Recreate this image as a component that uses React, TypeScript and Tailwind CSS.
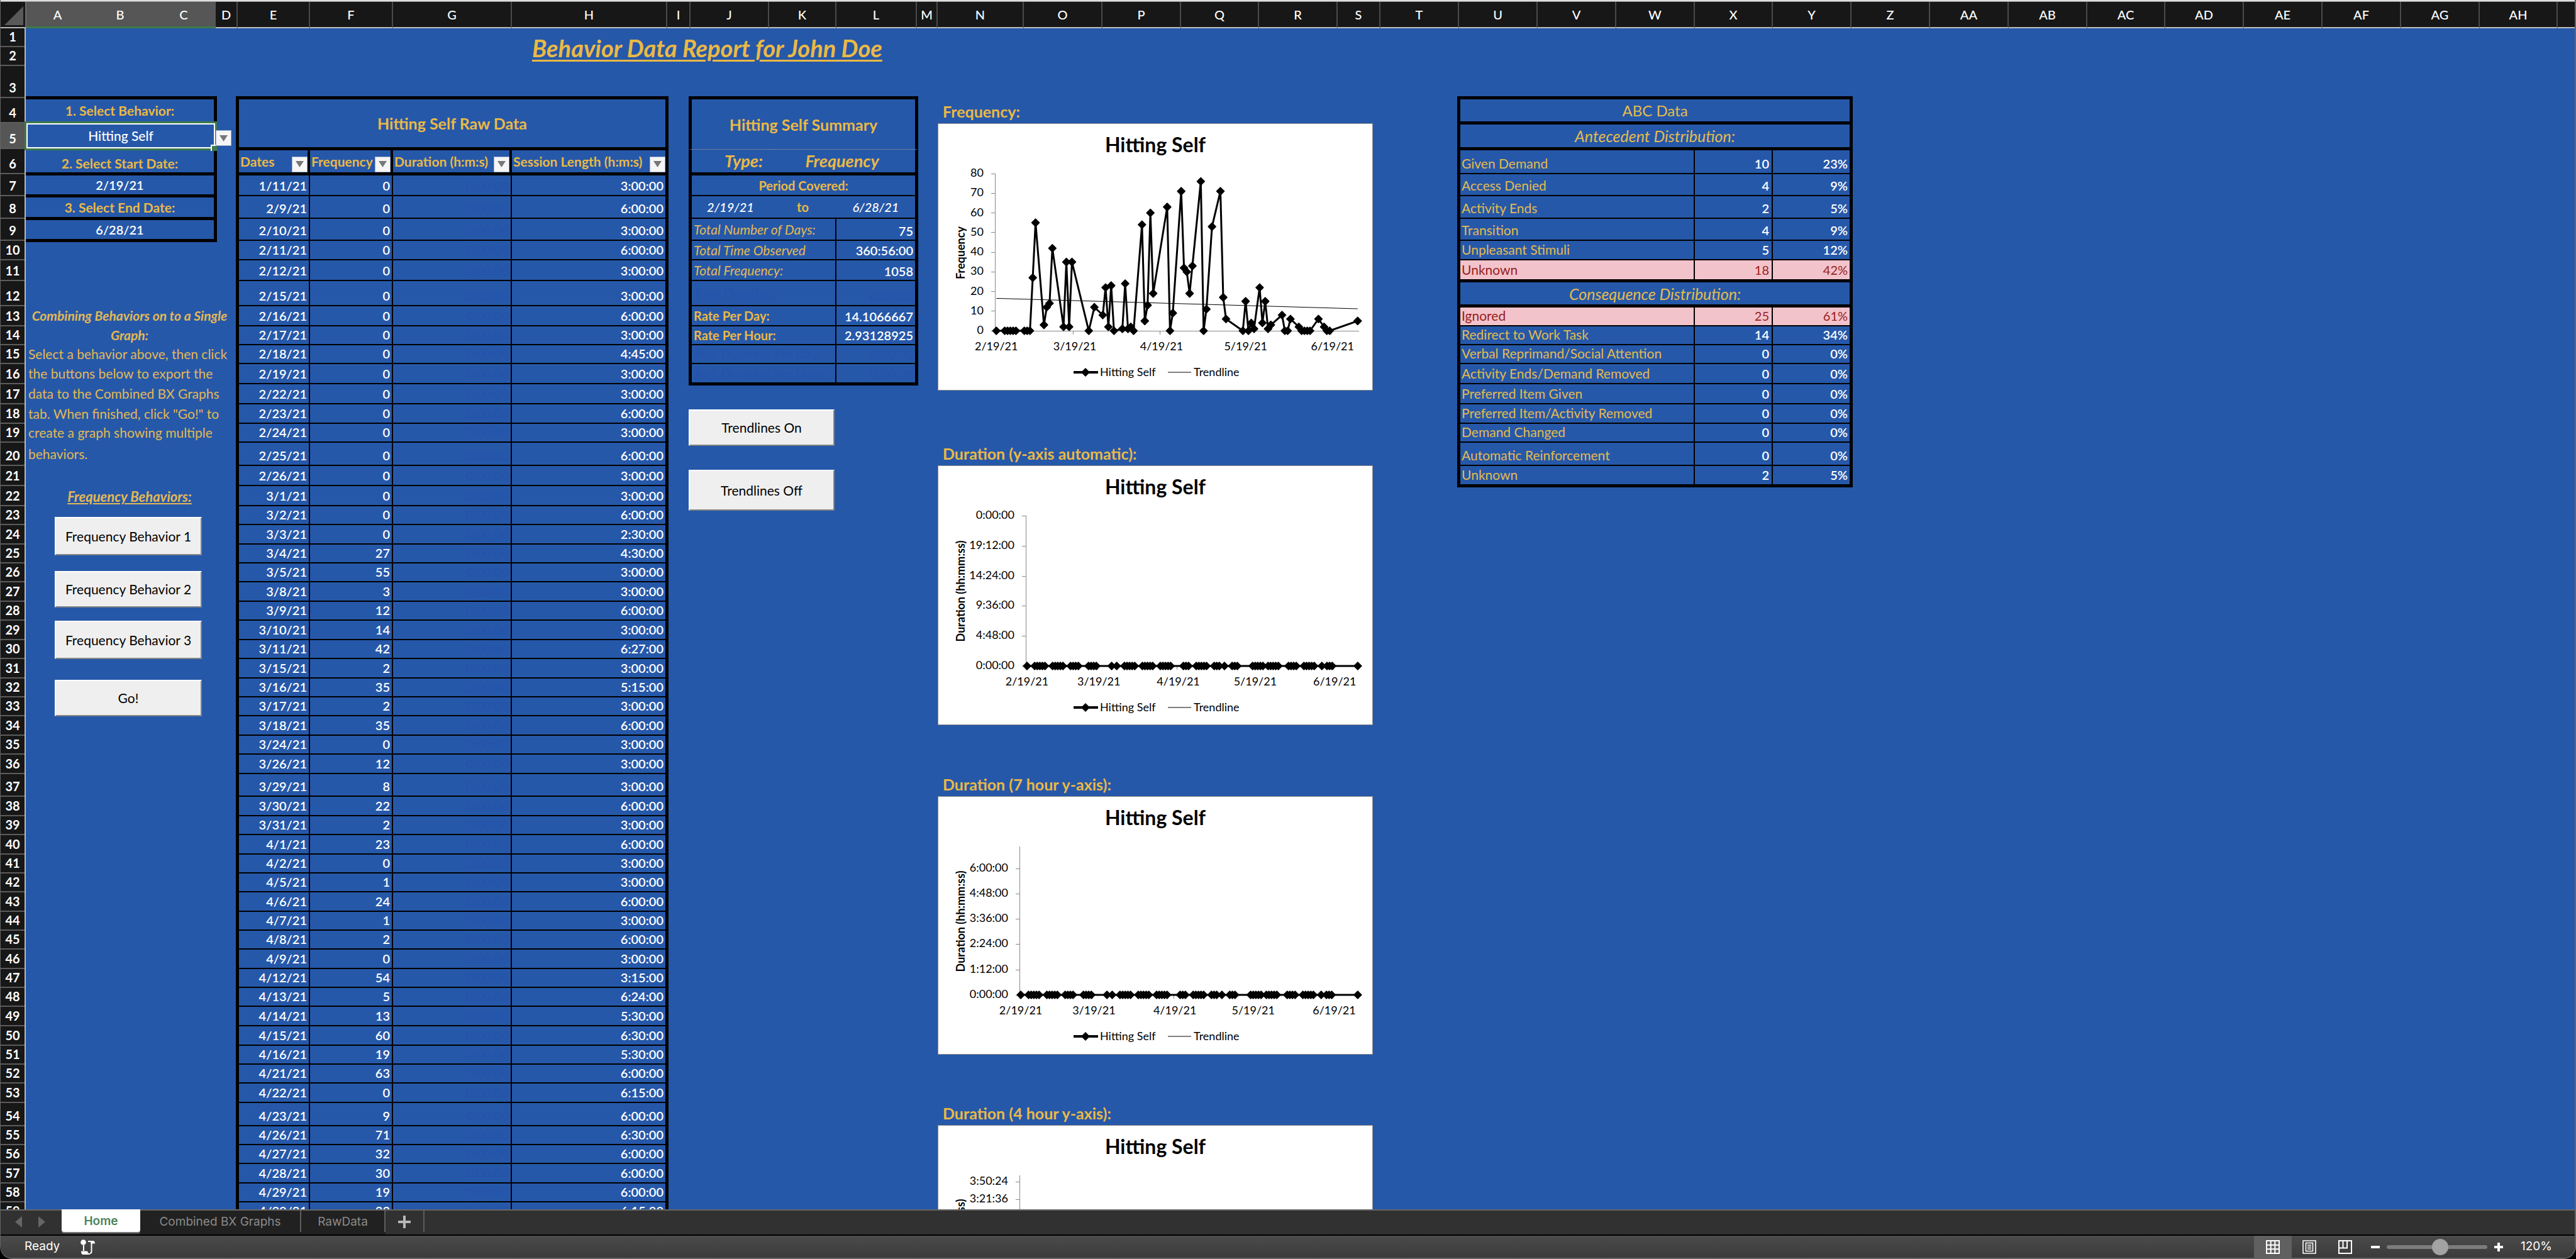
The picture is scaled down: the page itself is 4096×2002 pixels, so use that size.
import React from "react";

/* Bottom edge of every sheet row; index 0 is the top of row 1. */
const EDGES = [
  45, 74, 104, 155, 195, 236, 276, 311, 347, 382, 413, 446, 486, 518, 548, 578, 610, 642, 673, 703,
  740, 772, 804, 834, 865, 895, 925, 956, 986, 1017, 1047, 1078, 1108, 1138, 1169, 1199, 1230, 1266,
  1297, 1327, 1358, 1388, 1418, 1449, 1479, 1509, 1540, 1570, 1600, 1631, 1662, 1692, 1722, 1753,
  1790, 1820, 1850, 1881, 1911, 1941,
];
const THIN = 1;
const THICK = 3;

const span = (from: number, to: number, topLine = 0, bottomLine = 0) => ({
  height: EDGES[to] + bottomLine - EDGES[from - 1] - topLine,
});

const COLUMNS: [string, number][] = [
  ["A", 99], ["B", 100], ["C", 102], ["D", 35], ["E", 115], ["F", 132], ["G", 189], ["H", 247],
  ["I", 37], ["J", 125], ["K", 107], ["L", 128], ["M", 33], ["N", 137], ["O", 125], ["P", 125],
  ["Q", 124], ["R", 125], ["S", 68], ["T", 125], ["U", 125], ["V", 125], ["W", 125], ["X", 124],
  ["Y", 125], ["Z", 125], ["AA", 125], ["AB", 125], ["AC", 124], ["AD", 125], ["AE", 125],
  ["AF", 125], ["AG", 125], ["AH", 124],
];

const RAW: [string, number, string][] = [
  ["1/11/21", 0, "3:00:00"], ["2/9/21", 0, "6:00:00"], ["2/10/21", 0, "3:00:00"],
  ["2/11/21", 0, "6:00:00"], ["2/12/21", 0, "3:00:00"], ["2/15/21", 0, "3:00:00"],
  ["2/16/21", 0, "6:00:00"], ["2/17/21", 0, "3:00:00"], ["2/18/21", 0, "4:45:00"],
  ["2/19/21", 0, "3:00:00"], ["2/22/21", 0, "3:00:00"], ["2/23/21", 0, "6:00:00"],
  ["2/24/21", 0, "3:00:00"], ["2/25/21", 0, "6:00:00"], ["2/26/21", 0, "3:00:00"],
  ["3/1/21", 0, "3:00:00"], ["3/2/21", 0, "6:00:00"], ["3/3/21", 0, "2:30:00"],
  ["3/4/21", 27, "4:30:00"], ["3/5/21", 55, "3:00:00"], ["3/8/21", 3, "3:00:00"],
  ["3/9/21", 12, "6:00:00"], ["3/10/21", 14, "3:00:00"], ["3/11/21", 42, "6:27:00"],
  ["3/15/21", 2, "3:00:00"], ["3/16/21", 35, "5:15:00"], ["3/17/21", 2, "3:00:00"],
  ["3/18/21", 35, "6:00:00"], ["3/24/21", 0, "3:00:00"], ["3/26/21", 12, "3:00:00"],
  ["3/29/21", 8, "3:00:00"], ["3/30/21", 22, "6:00:00"], ["3/31/21", 2, "3:00:00"],
  ["4/1/21", 23, "6:00:00"], ["4/2/21", 0, "3:00:00"], ["4/5/21", 1, "3:00:00"],
  ["4/6/21", 24, "6:00:00"], ["4/7/21", 1, "3:00:00"], ["4/8/21", 2, "6:00:00"],
  ["4/9/21", 0, "3:00:00"], ["4/12/21", 54, "3:15:00"], ["4/13/21", 5, "6:24:00"],
  ["4/14/21", 13, "5:30:00"], ["4/15/21", 60, "6:30:00"], ["4/16/21", 19, "5:30:00"],
  ["4/21/21", 63, "6:00:00"], ["4/22/21", 0, "6:15:00"], ["4/23/21", 9, "6:00:00"],
  ["4/26/21", 71, "6:30:00"], ["4/27/21", 32, "6:00:00"], ["4/28/21", 30, "6:00:00"],
  ["4/29/21", 19, "6:00:00"], ["4/30/21", 33, "6:15:00"],
];

/* Days since 2/19/21 and the frequency on that day. */
const SERIES: [number, number][] = [
  [0, 0], [3, 0], [4, 0], [5, 0], [6, 0], [7, 0], [10, 0], [11, 0], [12, 0], [13, 27], [14, 55],
  [17, 3], [18, 12], [19, 14], [20, 42], [24, 2], [25, 35], [26, 2], [27, 35], [33, 0], [35, 12],
  [38, 8], [39, 22], [40, 2], [41, 23], [42, 0], [45, 1], [46, 24], [47, 1], [48, 2], [49, 0],
  [52, 54], [53, 5], [54, 13], [55, 60], [56, 19], [61, 63], [62, 0], [63, 9], [66, 71], [67, 32],
  [68, 30], [69, 19], [70, 33], [73, 76], [74, 0], [75, 11], [77, 53], [80, 71], [81, 17], [82, 6],
  [88, 0], [89, 15], [90, 0], [91, 4], [92, 1], [94, 22], [95, 4], [96, 15], [97, 1], [98, 3],
  [102, 8], [103, 0], [104, 0], [105, 6], [108, 2], [109, 0], [110, 0], [111, 0], [112, 0],
  [115, 6], [117, 2], [118, 0], [119, 0], [129, 5],
];

function FilterButton({ label }: { label: string }) {
  return (
    <button
      aria-label={label}
      className="flex h-[25px] w-[25px] shrink-0 items-center justify-center border border-[#9fb0cc] bg-[#f6f6f6]"
    >
      <svg width="13" height="10" viewBox="0 0 13 10">
        <path d="M0 0H13L6.5 10Z" fill="#777" />
      </svg>
    </button>
  );
}

function MacroButton({ children, className }: { children: string; className: string }) {
  return (
    <button
      className={
        "border-2 border-t-white border-r-[#858585] border-b-[#858585] border-l-white bg-[#efefef] text-[21px] leading-7 text-black " +
        className
      }
    >
      {children}
    </button>
  );
}

function ColumnHeader() {
  return (
    <div className="flex h-[42px] shrink-0 bg-[#171717] text-xl font-medium text-white">
      <div className="flex w-[41px] shrink-0 items-end justify-end border-r-2 border-b-2 border-r-[#6b6b6b] border-b-[#b9b9b9] p-[3px]">
        <svg width="30" height="30" viewBox="0 0 30 30">
          <path d="M30 0V30H0Z" fill="#595959" />
        </svg>
      </div>
      {COLUMNS.map(([name, width], i) => (
        <div
          key={name}
          style={{ width }}
          className={
            "flex shrink-0 items-center justify-center " +
            (i < 3
              ? "border-b-[3px] border-[#3e7a4a] bg-[#565656]"
              : "border-r-2 border-b-2 border-r-[#4a4a4a] border-b-[#bdbdbd]")
          }
        >
          {name}
        </div>
      ))}
      <div className="flex-1 border-b-2 border-[#bdbdbd]" />
    </div>
  );
}

function RowHeader() {
  return (
    <div className="w-10 shrink-0 border-r-2 border-[#b9b9b9] bg-[#171717] text-xl leading-6 font-bold text-white">
      {EDGES.slice(1).map((_, i) => (
        <div
          key={i}
          style={span(i + 1, i + 1, i === 0 ? 0 : THIN, THIN)}
          className={
            "flex items-end justify-center border-b-2 border-[#5c5c5c] pb-[3px] " + (i === 4 ? "bg-[#565656]" : "")
          }
        >
          {i + 1}
        </div>
      ))}
    </div>
  );
}

const NOTE = [
  "Select a behavior above, then click",
  "the buttons below to export the",
  "data to the Combined BX Graphs",
  'tab. When finished, click "Go!" to',
  "create a graph showing multiple",
  "behaviors.",
];

function Controls() {
  return (
    <div className="w-[334px] shrink-0 pt-[108px] text-[21px] leading-7">
      <div className="w-[304px] text-center">
        <label
          htmlFor="behavior"
          className="flex h-10 items-center justify-center border-t-[5px] border-r-[5px] border-black font-bold text-[#ebb945]"
        >
          1. Select Behavior:
        </label>
        <div className="relative -ml-[2px] h-[46px] border-[3px] border-[#3e7a4a]">
          <select
            id="behavior"
            className="h-full w-full appearance-none border-2 border-white text-center font-medium text-white [text-align-last:center]"
          >
            <option>Hitting Self</option>
          </select>
          <span className="absolute -right-[3px] -bottom-[4px] h-[10px] w-[10px] border-t-2 border-l-2 border-white bg-[#3e7a4a]" />
          <span className="absolute top-[11px] left-[301px]">
            <FilterButton label="Open behavior list" />
          </span>
        </div>
        <label
          htmlFor="start"
          className="flex h-10 items-end justify-center border-r-[5px] border-b-[5px] border-black font-bold text-[#ebb945]"
        >
          2. Select Start Date:
        </label>
        <input
          id="start"
          defaultValue="2/19/21"
          className="block h-[35px] w-full border-r-[5px] border-b-[5px] border-black text-center text-xl font-semibold text-white"
        />
        <label
          htmlFor="end"
          className="flex h-9 items-center justify-center border-r-[5px] border-b-[5px] border-black font-bold text-[#ebb945]"
        >
          3. Select End Date:
        </label>
        <input
          id="end"
          defaultValue="6/28/21"
          className="block h-[35px] w-full border-r-[5px] border-b-[5px] border-black text-center text-xl font-semibold text-white"
        />
      </div>
      <div className="mt-[101px] w-[330px] text-[#e3b855]">
        <div style={span(13, 13)} className="flex items-center justify-center font-bold whitespace-nowrap italic">
          Combining Behaviors on to a Single
        </div>
        <div style={span(14, 14)} className="flex items-center justify-center font-bold italic">
          Graph:
        </div>
        {NOTE.map((line, i) => (
          <div key={line} style={span(15 + i, 15 + i)} className="flex items-center pl-1 whitespace-nowrap">
            {line}
          </div>
        ))}
        <div style={span(21, 22)} className="flex items-end justify-center text-[22px] font-bold italic underline">
          Frequency Behaviors:
        </div>
      </div>
      <div className="flex flex-col pt-[18px] pl-[46px]">
        <MacroButton className="h-[61px] w-[234px]">Frequency Behavior 1</MacroButton>
        <MacroButton className="mt-[25px] h-[58px] w-[234px]">Frequency Behavior 2</MacroButton>
        <MacroButton className="mt-[21px] h-[61px] w-[234px]">Frequency Behavior 3</MacroButton>
        <MacroButton className="mt-[33px] h-[58px] w-[234px]">Go!</MacroButton>
      </div>
    </div>
  );
}

const RAW_HEADS = ["Dates", "Frequency", "Duration (h:m:s)", "Session Length (h:m:s)"];

function RawTable() {
  return (
    <table className="w-[688px] shrink-0 table-fixed border-separate border-spacing-0 text-xl leading-6">
      <colgroup>
        <col className="w-[118px]" />
        <col className="w-[132px]" />
        <col className="w-[189px]" />
        <col className="w-[249px]" />
      </colgroup>
      <thead className="text-[#ebb945]">
        <tr style={span(4, 5, -2, THICK)}>
          <th colSpan={4} className="border-[5px] border-black text-[25px] leading-8 font-bold">
            Hitting Self Raw Data
          </th>
        </tr>
        <tr style={span(6, 6, THICK, THICK)}>
          {RAW_HEADS.map((name, i) => (
            <th
              key={name}
              className={
                "border-b-[5px] border-black p-0 text-[21px] font-bold " +
                (i === 3 ? "border-r-[5px]" : "border-r-4") +
                (i === 0 ? " border-l-[5px]" : "")
              }
            >
              <div className="flex h-[34px] items-end justify-between pl-[2px]">
                <span className="self-center whitespace-nowrap">{name}</span>
                <FilterButton label={"Filter " + name} />
              </div>
            </th>
          ))}
        </tr>
      </thead>
      <tbody className="text-right align-bottom font-semibold text-white">
        {RAW.map(([date, count, length], i) => (
          <tr key={date} style={span(7 + i, 7 + i, i === 0 ? THICK : THIN, THIN)}>
            <td className="border-r-2 border-b-2 border-l-[5px] border-black p-0 pr-[3px] pb-[3px]">{date}</td>
            <td className="border-r-2 border-b-2 border-black p-0 pr-[3px] pb-[3px]">{count}</td>
            <td className="border-r-2 border-b-2 border-black p-0 pr-[3px] pb-[3px] text-[#2553ad]">0:00:00</td>
            <td className="border-r-[5px] border-b-2 border-black p-0 pr-[3px] pb-[3px]">{length}</td>
          </tr>
        ))}
      </tbody>
    </table>
  );
}

const TOTALS: [string, string, string, string][] = [
  ["Total Number of Days:", "75", "italic text-[#e3b855]", "text-white"],
  ["Total Time Observed", "360:56:00", "italic text-[#e3b855]", "text-white"],
  ["Total Frequency:", "1058", "italic text-[#e3b855]", "text-white"],
  ["Total Duration:", "0:00:00", "italic text-[#2553ad]", "text-[#2553ad]"],
  ["Rate Per Day:", "14.1066667", "font-bold text-[#ebb945]", "text-white"],
  ["Rate Per Hour:", "2.93128925", "font-bold text-[#ebb945]", "text-white"],
  ["Avg. Duration Per Day:", "0:00:00", "font-bold text-[#2553ad]", "text-[#2553ad]"],
  ["Avg. Duration Per Hour:", "0:00:00", "font-bold text-[#2553ad]", "text-[#2553ad]"],
];

function SummaryTable() {
  return (
    <table className="w-[365px] table-fixed border-separate border-spacing-0 text-xl leading-6">
      <colgroup>
        <col className="w-[128px]" />
        <col className="w-[107px]" />
        <col className="w-[130px]" />
      </colgroup>
      <tbody>
        <tr style={span(4, 5, -2, THIN)}>
          <th
            colSpan={3}
            className="border-x-[5px] border-t-[5px] border-black text-[25px] leading-8 font-bold text-[#ebb945]"
          >
            Hitting Self Summary
          </th>
        </tr>
        <tr style={span(6, 6, THIN, THICK)} className="text-[27px] leading-8 font-bold text-[#ebb945] italic">
          <td className="border-t border-b-[5px] border-l-[5px] border-black border-t-[#a9a98c] p-0 pr-[10px] text-right [border-top-style:dotted]">
            Type:
          </td>
          <td
            colSpan={2}
            className="border-t border-r-[5px] border-b-[5px] border-black border-t-[#a9a98c] p-0 text-center [border-top-style:dotted]"
          >
            Frequency
          </td>
        </tr>
        <tr style={span(7, 7, THICK, THIN)}>
          <th colSpan={3} className="border-x-[5px] border-b-2 border-black p-0 font-bold text-[#ebb945]">
            Period Covered:
          </th>
        </tr>
        <tr style={span(8, 8, THIN, THIN)} className="text-center font-medium text-white">
          <td className="border-b-2 border-l-[5px] border-black p-0 italic">2/19/21</td>
          <td className="border-b-2 border-black p-0 font-bold text-[#ebb945]">to</td>
          <td className="border-r-[5px] border-b-2 border-black p-0 italic">6/28/21</td>
        </tr>
        {TOTALS.map(([label, value, labelStyle, valueStyle], i) => {
          const last = i === TOTALS.length - 1;
          return (
            <tr key={label} style={span(9 + i, 9 + i, THIN, last ? THICK : THIN)}>
              <th
                colSpan={2}
                className={
                  "border-r-2 border-l-[5px] border-black p-0 pl-[3px] text-left align-middle whitespace-nowrap " +
                  (last ? "border-b-[5px] " : "border-b-2 ") +
                  (labelStyle.startsWith("italic") ? "text-[21px] font-normal " : "") +
                  labelStyle
                }
              >
                {label}
              </th>
              <td
                className={
                  "border-r-[5px] border-black p-0 pr-[3px] pb-[2px] text-right align-bottom font-semibold " +
                  (last ? "border-b-[5px] " : "border-b-2 ") +
                  valueStyle
                }
              >
                {value}
              </td>
            </tr>
          );
        })}
      </tbody>
    </table>
  );
}

type ChartProps = {
  height: number;
  axisX: number;
  top: number;
  bottom: number;
  labels: [string, number][];
  axisTitle: string;
  axisTitleY: number;
  frequency?: boolean;
};

const DATE_TICKS: [string, number][] = [
  ["2/19/21", 0], ["3/19/21", 28], ["4/19/21", 59], ["5/19/21", 89], ["6/19/21", 120],
];

function Diamond({ x, y }: { x: number; y: number }) {
  return (
    <path
      d={`M${x} ${y - 6}L${x + 6} ${y}L${x} ${y + 6}L${x - 6} ${y}Z`}
      stroke="#000"
      strokeWidth="1.5"
      strokeLinejoin="round"
    />
  );
}

function Chart({ height, axisX, top, bottom, labels, axisTitle, axisTitleY, frequency }: ChartProps) {
  const day = (670 - axisX) / 130;
  const px = (d: number) => axisX + (d + 0.5) * day;
  const py = (v: number) => (frequency ? bottom - (v * (bottom - top)) / 80 : bottom);
  const legendY = bottom + 66;
  return (
    <svg
      viewBox={`0 0 692 ${height}`}
      width="692"
      height={height}
      className="block shrink-0 bg-white font-['Lato',sans-serif] outline-1 -outline-offset-1 outline-[#8a8a8a]"
      role="img"
      aria-label={"Hitting Self, " + axisTitle}
    >
      <text x="346" y="46" textAnchor="middle" className="text-[32px] font-bold">
        Hitting Self
      </text>
      <text
        transform={`translate(43 ${axisTitleY}) rotate(-90)`}
        textAnchor="middle"
        className="text-[18px] font-bold"
      >
        {axisTitle}
      </text>
      <g stroke="#888" strokeWidth="1" shapeRendering="crispEdges">
        <path d={`M${axisX} ${top}V${bottom + 6}M${axisX - 6} ${bottom}H670`} />
        {labels.map(([, y], i) => (
          <path key={i} d={`M${axisX - 6} ${y}H${axisX}`} />
        ))}
        {DATE_TICKS.slice(1).map(([name, d]) => (
          <path key={name} d={`M${axisX + d * day} ${bottom}v6`} />
        ))}
      </g>
      <g className="text-[18px]">
        {labels.map(([name, y], i) => (
          <text key={i} x={axisX - 18} y={y + 5} textAnchor="end">
            {name}
          </text>
        ))}
        {DATE_TICKS.map(([name, d]) => (
          <text key={name} x={px(d)} y={bottom + 31} textAnchor="middle">
            {name}
          </text>
        ))}
      </g>
      {frequency && <path d={`M${px(0)} ${py(16.5)}L${px(129)} ${py(11.2)}`} stroke="#000" strokeWidth="1" />}
      <polyline
        points={SERIES.map(([d, v]) => `${px(d)},${py(v)}`).join(" ")}
        fill="none"
        stroke="#000"
        strokeWidth="3"
        strokeLinejoin="round"
      />
      {SERIES.map(([d, v]) => (
        <Diamond key={d} x={px(d)} y={py(v)} />
      ))}
      <path d={`M216 ${legendY}H255`} stroke="#000" strokeWidth="4" />
      <Diamond x={235} y={legendY} />
      <path d={`M366 ${legendY}H403`} stroke="#000" strokeWidth="1" />
      <g className="text-[18px]">
        <text x="258" y={legendY + 6}>
          Hitting Self
        </text>
        <text x="407" y={legendY + 6}>
          Trendline
        </text>
      </g>
    </svg>
  );
}

function ChartHeading({ children, height }: { children: string; height: string }) {
  return (
    <h2 className={"flex shrink-0 items-end pb-[3px] pl-2 text-[25px] leading-8 font-bold text-[#ebb945] " + height}>
      {children}
    </h2>
  );
}

function Charts() {
  return (
    <div className="ml-[31px] flex w-[692px] shrink-0 flex-col">
      <ChartHeading height="h-[151px]">Frequency:</ChartHeading>
      <Chart
        height={425}
        axisX={91}
        top={80}
        bottom={330}
        axisTitle="Frequency"
        axisTitleY={206}
        frequency
        labels={[80, 70, 60, 50, 40, 30, 20, 10, 0].map((v) => [String(v), 330 - (v * 250) / 80])}
      />
      <ChartHeading height="h-[119px]">Duration (y-axis automatic):</ChartHeading>
      <Chart
        height={413}
        axisX={140}
        top={80}
        bottom={319}
        axisTitle="Duration (hh:mm:ss)"
        axisTitleY={200}
        labels={[
          ["0:00:00", 80], ["19:12:00", 128], ["14:24:00", 176], ["9:36:00", 223], ["4:48:00", 271],
          ["0:00:00", 319],
        ]}
      />
      <ChartHeading height="h-[113px]">Duration (7 hour y-axis):</ChartHeading>
      <Chart
        height={411}
        axisX={130}
        top={80}
        bottom={316}
        axisTitle="Duration (hh:mm:ss)"
        axisTitleY={199}
        labels={[
          ["6:00:00", 115], ["4:48:00", 155], ["3:36:00", 195], ["2:24:00", 235], ["1:12:00", 276],
          ["0:00:00", 316],
        ]}
      />
      <ChartHeading height="h-[112px]">Duration (4 hour y-axis):</ChartHeading>
      <Chart
        height={411}
        axisX={130}
        top={80}
        bottom={314}
        axisTitle="Duration (hh:mm:ss)"
        axisTitleY={198}
        labels={[
          ["3:50:24", 90], ["3:21:36", 118], ["2:52:48", 146], ["2:24:00", 174], ["1:55:12", 202],
          ["1:26:24", 230], ["0:57:36", 258], ["0:28:48", 286], ["0:00:00", 314],
        ]}
      />
    </div>
  );
}

const ANTECEDENTS: [string, string, string][] = [
  ["Given Demand", "10", "23%"],
  ["Access Denied", "4", "9%"],
  ["Activity Ends", "2", "5%"],
  ["Transition", "4", "9%"],
  ["Unpleasant Stimuli", "5", "12%"],
  ["Unknown", "18", "42%"],
];
const CONSEQUENCES: [string, string, string][] = [
  ["Ignored", "25", "61%"],
  ["Redirect to Work Task", "14", "34%"],
  ["Verbal Reprimand/Social Attention", "0", "0%"],
  ["Activity Ends/Demand Removed", "0", "0%"],
  ["Preferred Item Given", "0", "0%"],
  ["Preferred Item/Activity Removed", "0", "0%"],
  ["Demand Changed", "0", "0%"],
  ["Automatic Reinforcement", "0", "0%"],
  ["Unknown", "2", "5%"],
];

function AbcRows({ rows, first, peak }: { rows: [string, string, string][]; first: number; peak: number }) {
  return (
    <>
      {rows.map(([name, count, share], i) => {
        const last = i === rows.length - 1;
        const line = last ? "border-b-[5px] " : "border-b-2 ";
        const hot = i === peak;
        const weight = hot ? "" : "font-semibold";
        return (
          <tr
            key={name}
            style={span(first + i, first + i, i === 0 ? THICK : THIN, last ? THICK : THIN)}
            className={"align-bottom " + (hot ? "bg-[#f3c3cb] text-[#98211c]" : "text-white")}
          >
            <th
              className={
                "border-r-2 border-l-[5px] border-black p-0 pb-[3px] pl-[2px] text-left align-bottom text-[21px] font-normal " +
                line +
                (hot ? "" : "text-[#e3bb50]")
              }
            >
              {name}
            </th>
            <td className={"border-r-2 border-black p-0 pr-1 pb-[3px] text-right " + line + weight}>{count}</td>
            <td className={"border-r-[5px] border-black p-0 pr-[3px] pb-[3px] text-right " + line + weight}>
              {share}
            </td>
          </tr>
        );
      })}
    </>
  );
}

function AbcTable() {
  return (
    <div className="ml-[134px] shrink-0 pt-[108px]">
      <table className="w-[629px] table-fixed border-separate border-spacing-0 text-xl leading-6">
        <colgroup>
          <col className="w-[378px]" />
          <col className="w-[124px]" />
          <col className="w-[127px]" />
        </colgroup>
        <tbody>
          <tr style={span(4, 4, -2, THICK)}>
            <th colSpan={3} className="border-[5px] border-black p-0 text-2xl font-normal text-[#e3bb50]">
              ABC Data
            </th>
          </tr>
          <tr style={span(5, 5, THICK, THICK)}>
            <th
              colSpan={3}
              className="border-x-[5px] border-b-[5px] border-black p-0 text-[25px] leading-8 font-normal text-[#e3bb50] italic"
            >
              Antecedent Distribution:
            </th>
          </tr>
          <AbcRows rows={ANTECEDENTS} first={6} peak={5} />
          <tr style={span(12, 12, THICK, THICK)}>
            <th
              colSpan={3}
              className="border-x-[5px] border-b-[5px] border-black p-0 text-[25px] leading-8 font-normal text-[#e3bb50] italic"
            >
              Consequence Distribution:
            </th>
          </tr>
          <AbcRows rows={CONSEQUENCES} first={13} peak={0} />
        </tbody>
      </table>
    </div>
  );
}

function TabBar() {
  return (
    <div className="flex h-[42px] shrink-0 border-t-2 border-b-2 border-t-[#666] border-b-black bg-[#313131] font-['Inter',sans-serif] text-[19px] text-[#8a8a8a]">
      <div className="flex w-[97px] items-center gap-[26px] pb-[2px] pl-[23px]">
        <button aria-label="Previous sheet">
          <svg width="11" height="18" viewBox="0 0 11 18">
            <path d="M11 0V18L0 9Z" fill="#666" />
          </svg>
        </button>
        <button aria-label="Next sheet">
          <svg width="11" height="18" viewBox="0 0 11 18">
            <path d="M0 0V18L11 9Z" fill="#666" />
          </svg>
        </button>
      </div>
      <button className="-mt-[2px] h-[36px] w-[125px] rounded-b bg-white pt-[2px] font-semibold text-[#4a8257] shadow-[0_2px_0_#777]">
        Home
      </button>
      <div className="flex bg-[#212121]">
        <button className="h-[34px] w-[256px] border-r-2 border-[#5d5d5d] pt-[2px]">Combined BX Graphs</button>
        <button className="h-[34px] w-[134px] border-r-2 border-[#5d5d5d] pt-[2px]">RawData</button>
      </div>
      <button
        aria-label="New sheet"
        className="flex h-[34px] w-[62px] items-center justify-center border-r-2 border-[#5d5d5d] pt-[2px]"
      >
        <svg width="20" height="20" viewBox="0 0 20 20">
          <path d="M10 0V20M0 10H20" stroke="#b8b8b8" strokeWidth="4" />
        </svg>
      </button>
    </div>
  );
}

function StatusBar() {
  return (
    <div className="flex h-[35px] shrink-0 items-center bg-linear-to-b from-[#4b4b4b] to-[#3b3b3b] font-['Inter',sans-serif] text-[19px] text-white">
      <span className="pl-[38px]">Ready</span>
      <button aria-label="Record macro" className="ml-[33px]">
        <svg width="24" height="24" viewBox="0 0 24 24" fill="none">
          <circle cx="4.5" cy="4.5" r="4.3" fill="#fff" />
          <path d="M5 9V18M12 3H20" stroke="#fff" strokeWidth="2" />
          <path d="M17.500 4V19Q17.500 22 15 22" stroke="#fff" strokeWidth="2" />
          <path d="M16.500 7V4.500Q16.500 2 19.500 2Q23 2 23 6.500H18.500" fill="#fff" />
          <path d="M1 18.500H11Q11.500 22 15 22.500V24H4.500Q1 24 1 18.500Z" fill="#fff" />
        </svg>
      </button>
      <div className="ml-auto flex h-full items-center">
        <button aria-label="Normal view" className="flex h-full w-[60px] items-center justify-center bg-[#606060]">
          <svg width="22" height="22" viewBox="0 0 22 22" fill="none" stroke="#fff" strokeWidth="2">
            <path d="M1 1H21V21H1ZM7.700 1V21M14.300 1V21M1 7.700H21M1 14.300H21" />
          </svg>
        </button>
        <button aria-label="Page layout view" className="ml-[17px]">
          <svg width="22" height="22" viewBox="0 0 22 22" fill="none" stroke="#fff" strokeWidth="1.600">
            <path d="M1 1H21V21H1ZM5.500 4.500H16.500V17.500H5.500ZM8 8H14M8 11H14M8 14H14" />
          </svg>
        </button>
        <button aria-label="Page break preview" className="ml-[35px]">
          <svg width="22" height="22" viewBox="0 0 22 22" fill="none" stroke="#fff" strokeWidth="2">
            <path d="M1 1H21V21H1ZM1 12.500H14V1M7.500 1V12.500" />
          </svg>
        </button>
        <button aria-label="Zoom out" className="ml-[30px]">
          <svg width="14" height="14" viewBox="0 0 14 14">
            <path d="M0 7H14" stroke="#fff" strokeWidth="4" />
          </svg>
        </button>
        <input
          type="range"
          aria-label="Zoom"
          defaultValue={54}
          className="ml-[11px] h-[6px] w-[160px] appearance-none rounded-full bg-[#7d7d7d] [&::-webkit-slider-thumb]:h-[26px] [&::-webkit-slider-thumb]:w-[26px] [&::-webkit-slider-thumb]:appearance-none [&::-webkit-slider-thumb]:rounded-full [&::-webkit-slider-thumb]:bg-[#a3a3a3]"
        />
        <button aria-label="Zoom in" className="ml-[11px]">
          <svg width="14" height="14" viewBox="0 0 14 14">
            <path d="M0 7H14M7 0V14" stroke="#fff" strokeWidth="4" />
          </svg>
        </button>
        <span className="w-[114px] pl-7">120%</span>
      </div>
    </div>
  );
}

export default function App() {
  return (
    <div className="h-screen bg-black font-['Lato',sans-serif]">
      <div className="flex h-full flex-col overflow-hidden rounded-b-[20px] border-r-2 border-b-2 border-l border-[#636363]">
        <div className="h-[3px] shrink-0 border-b border-[#999] bg-[#dedede]" />
        <ColumnHeader />
        <main className="flex min-h-0 flex-1 overflow-hidden bg-[#2658a9]">
          <RowHeader />
          <Controls />
          <div className="shrink-0">
            <h1 className="h-[108px] pt-[9px] pl-[471px] text-[38px] leading-[44px] font-bold text-[#ebb945] italic underline decoration-[3px] underline-offset-4">
              Behavior Data Report for John Doe
            </h1>
            <div className="flex items-start gap-8">
              <RawTable />
              <div className="flex flex-col">
                <SummaryTable />
                <MacroButton className="mt-[38px] h-[58px] w-[232px]">Trendlines On</MacroButton>
                <MacroButton className="mt-[38px] h-[65px] w-[232px]">Trendlines Off</MacroButton>
              </div>
            </div>
          </div>
          <Charts />
          <AbcTable />
        </main>
        <TabBar />
        <StatusBar />
      </div>
    </div>
  );
}
